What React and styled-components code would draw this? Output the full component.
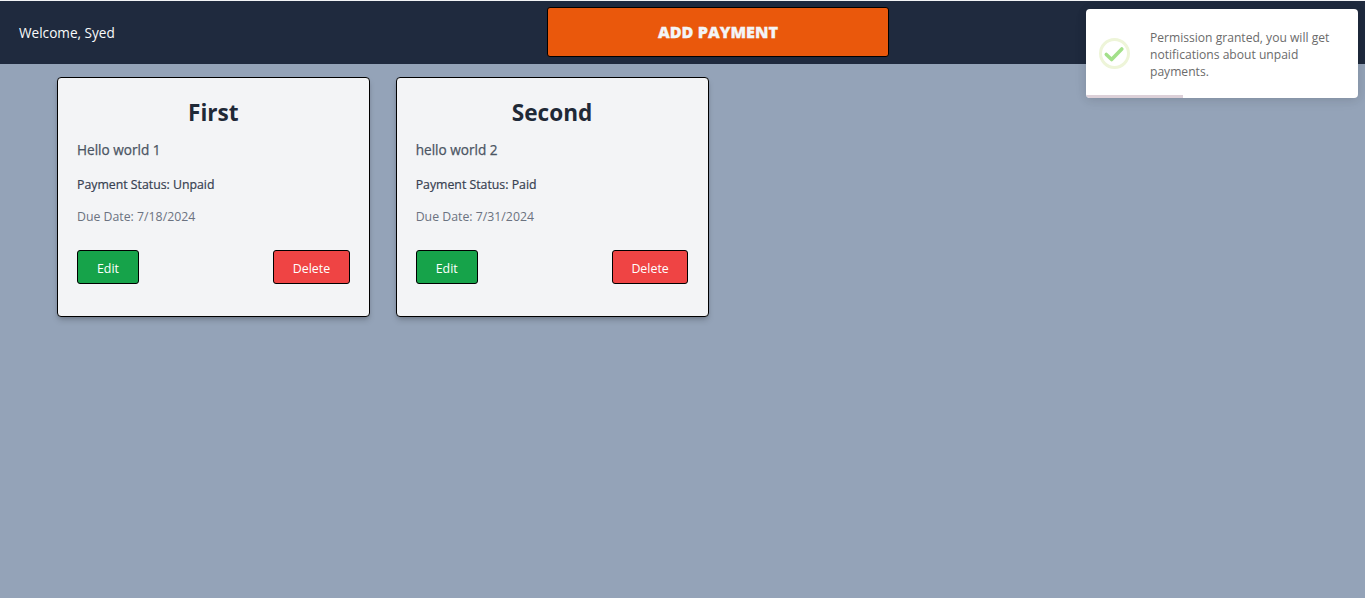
import React from "react";
import styled, { createGlobalStyle } from "styled-components";

const Global = createGlobalStyle`
  html, body {
    margin: 0;
    padding: 0;
    background: #94a3b8;
    font-family: "Open Sans", "Noto Sans", sans-serif;
  }
  * { box-sizing: border-box; }
`;

const Page = styled.div`
  min-height: 598px;
  background: #94a3b8;
  border-top: 1px solid #f3f4f6;
  overflow: hidden;
`;

const Navbar = styled.nav`
  height: 63px;
  background: #1f2a3e;
  display: grid;
  grid-template-columns: 547px 342px 1fr;
  align-items: start;
`;

const Welcome = styled.div`
  padding: 22px 0 0 19px;
  color: #f9fafb;
  font-size: 13.6px;
  line-height: 20px;
`;

const AddButton = styled.button`
  margin-top: 6px;
  height: 50px;
  background: #ea580c;
  border: 1px solid #000;
  border-radius: 3px;
  color: #f3f4f6;
  font-family: "Open Sans", sans-serif;
  font-size: 16.2px;
  font-weight: 800;
  -webkit-text-stroke: 0.3px #f3f4f6;
  text-transform: uppercase;
  padding: 0;
`;

const CardList = styled.main`
  display: flex;
  gap: 25.7px;
  padding: 13px 0 0 57px;
`;

const Card = styled.article`
  width: 313px;
  height: 240px;
  background: #f3f4f6;
  border: 1px solid #000;
  border-radius: 4px;
  padding: 19px 19.3px 0 19px;
  box-shadow: 0 4px 6px -1px rgba(0, 0, 0, 0.18), 0 2px 4px -2px rgba(0, 0, 0, 0.18);
`;

const Title = styled.h2`
  margin: 0;
  text-align: center;
  color: #1f2937;
  font-size: 22.6px;
  line-height: 32px;
  font-weight: 700;
`;

const Description = styled.p`
  margin: 11px 0 0;
  color: #4b5563;
  font-size: 13.6px;
  line-height: 20px;
  font-weight: 500;
  -webkit-text-stroke: 0.25px #4b5563;
`;

const Status = styled.p`
  margin: 15px 0 0;
  color: #374151;
  font-size: 12.3px;
  line-height: 20px;
  font-weight: 500;
  -webkit-text-stroke: 0.2px #374151;
`;

const DueDate = styled.p`
  margin: 12px 0 0;
  color: #6b7280;
  font-size: 12.3px;
  line-height: 20px;
`;

const Actions = styled.div`
  display: flex;
  justify-content: space-between;
  margin-top: 23px;
`;

const ActionButton = styled.button`
  width: ${(p) => p.$width}px;
  height: 34px;
  background: ${(p) => p.$color};
  border: 1px solid #000;
  border-radius: 3px;
  color: #fff;
  font-family: "Open Sans", sans-serif;
  font-size: 12.4px;
  padding: 3px 0 0;
`;

const Toast = styled.div`
  position: absolute;
  top: 9px;
  left: 1086px;
  width: 272px;
  height: 89px;
  background: #fff;
  border-radius: 4px;
  box-shadow: 0 1px 10px 0 rgba(0, 0, 0, 0.1), 0 2px 15px 0 rgba(0, 0, 0, 0.05);
  display: flex;
  overflow: hidden;
`;

const ToastIcon = styled.div`
  flex: none;
  width: 64px;
  padding: 29px 0 0 13px;
`;

const ToastText = styled.div`
  padding-top: 20px;
  color: #6b6b6b;
  font-size: 12.1px;
  line-height: 17px;
  width: 196px;
`;

const Progress = styled.div`
  position: absolute;
  left: 0;
  bottom: 0;
  height: 3px;
  background: #dcd0d8;
`;

function CheckIcon() {
  return (
    <svg width="31" height="31" viewBox="0 0 31 31" fill="none">
      <circle cx="15.5" cy="15.5" r="14" stroke="#eef5d9" strokeWidth="3" />
      <path d="M7.3 16.5 L12.6 21.5 L22.8 11" stroke="#a3e08a" strokeWidth="3.6" strokeLinecap="round" strokeLinejoin="round" />
    </svg>
  );
}

const payments = [
  { title: "First", text: "Hello world 1", status: "Unpaid", due: "7/18/2024" },
  { title: "Second", text: "hello world 2", status: "Paid", due: "7/31/2024" },
];

export default function App() {
  return (
    <Page>
      <Global />
      <Navbar>
        <Welcome>Welcome, Syed</Welcome>
        <AddButton>Add Payment</AddButton>
      </Navbar>
      <CardList>
        {payments.map((p) => (
          <Card key={p.title}>
            <Title>{p.title}</Title>
            <Description>{p.text}</Description>
            <Status>Payment Status: {p.status}</Status>
            <DueDate>Due Date: {p.due}</DueDate>
            <Actions>
              <ActionButton $width={62} $color="#16a34a">Edit</ActionButton>
              <ActionButton $width={76.6} $color="#ef4444">Delete</ActionButton>
            </Actions>
          </Card>
        ))}
      </CardList>
      <Toast>
        <ToastIcon><CheckIcon /></ToastIcon>
        <ToastText>Permission granted, you will get notifications about unpaid payments.</ToastText>
        <Progress style={{ width: `${(97 / 272) * 100}%` }} />
      </Toast>
    </Page>
  );
}
